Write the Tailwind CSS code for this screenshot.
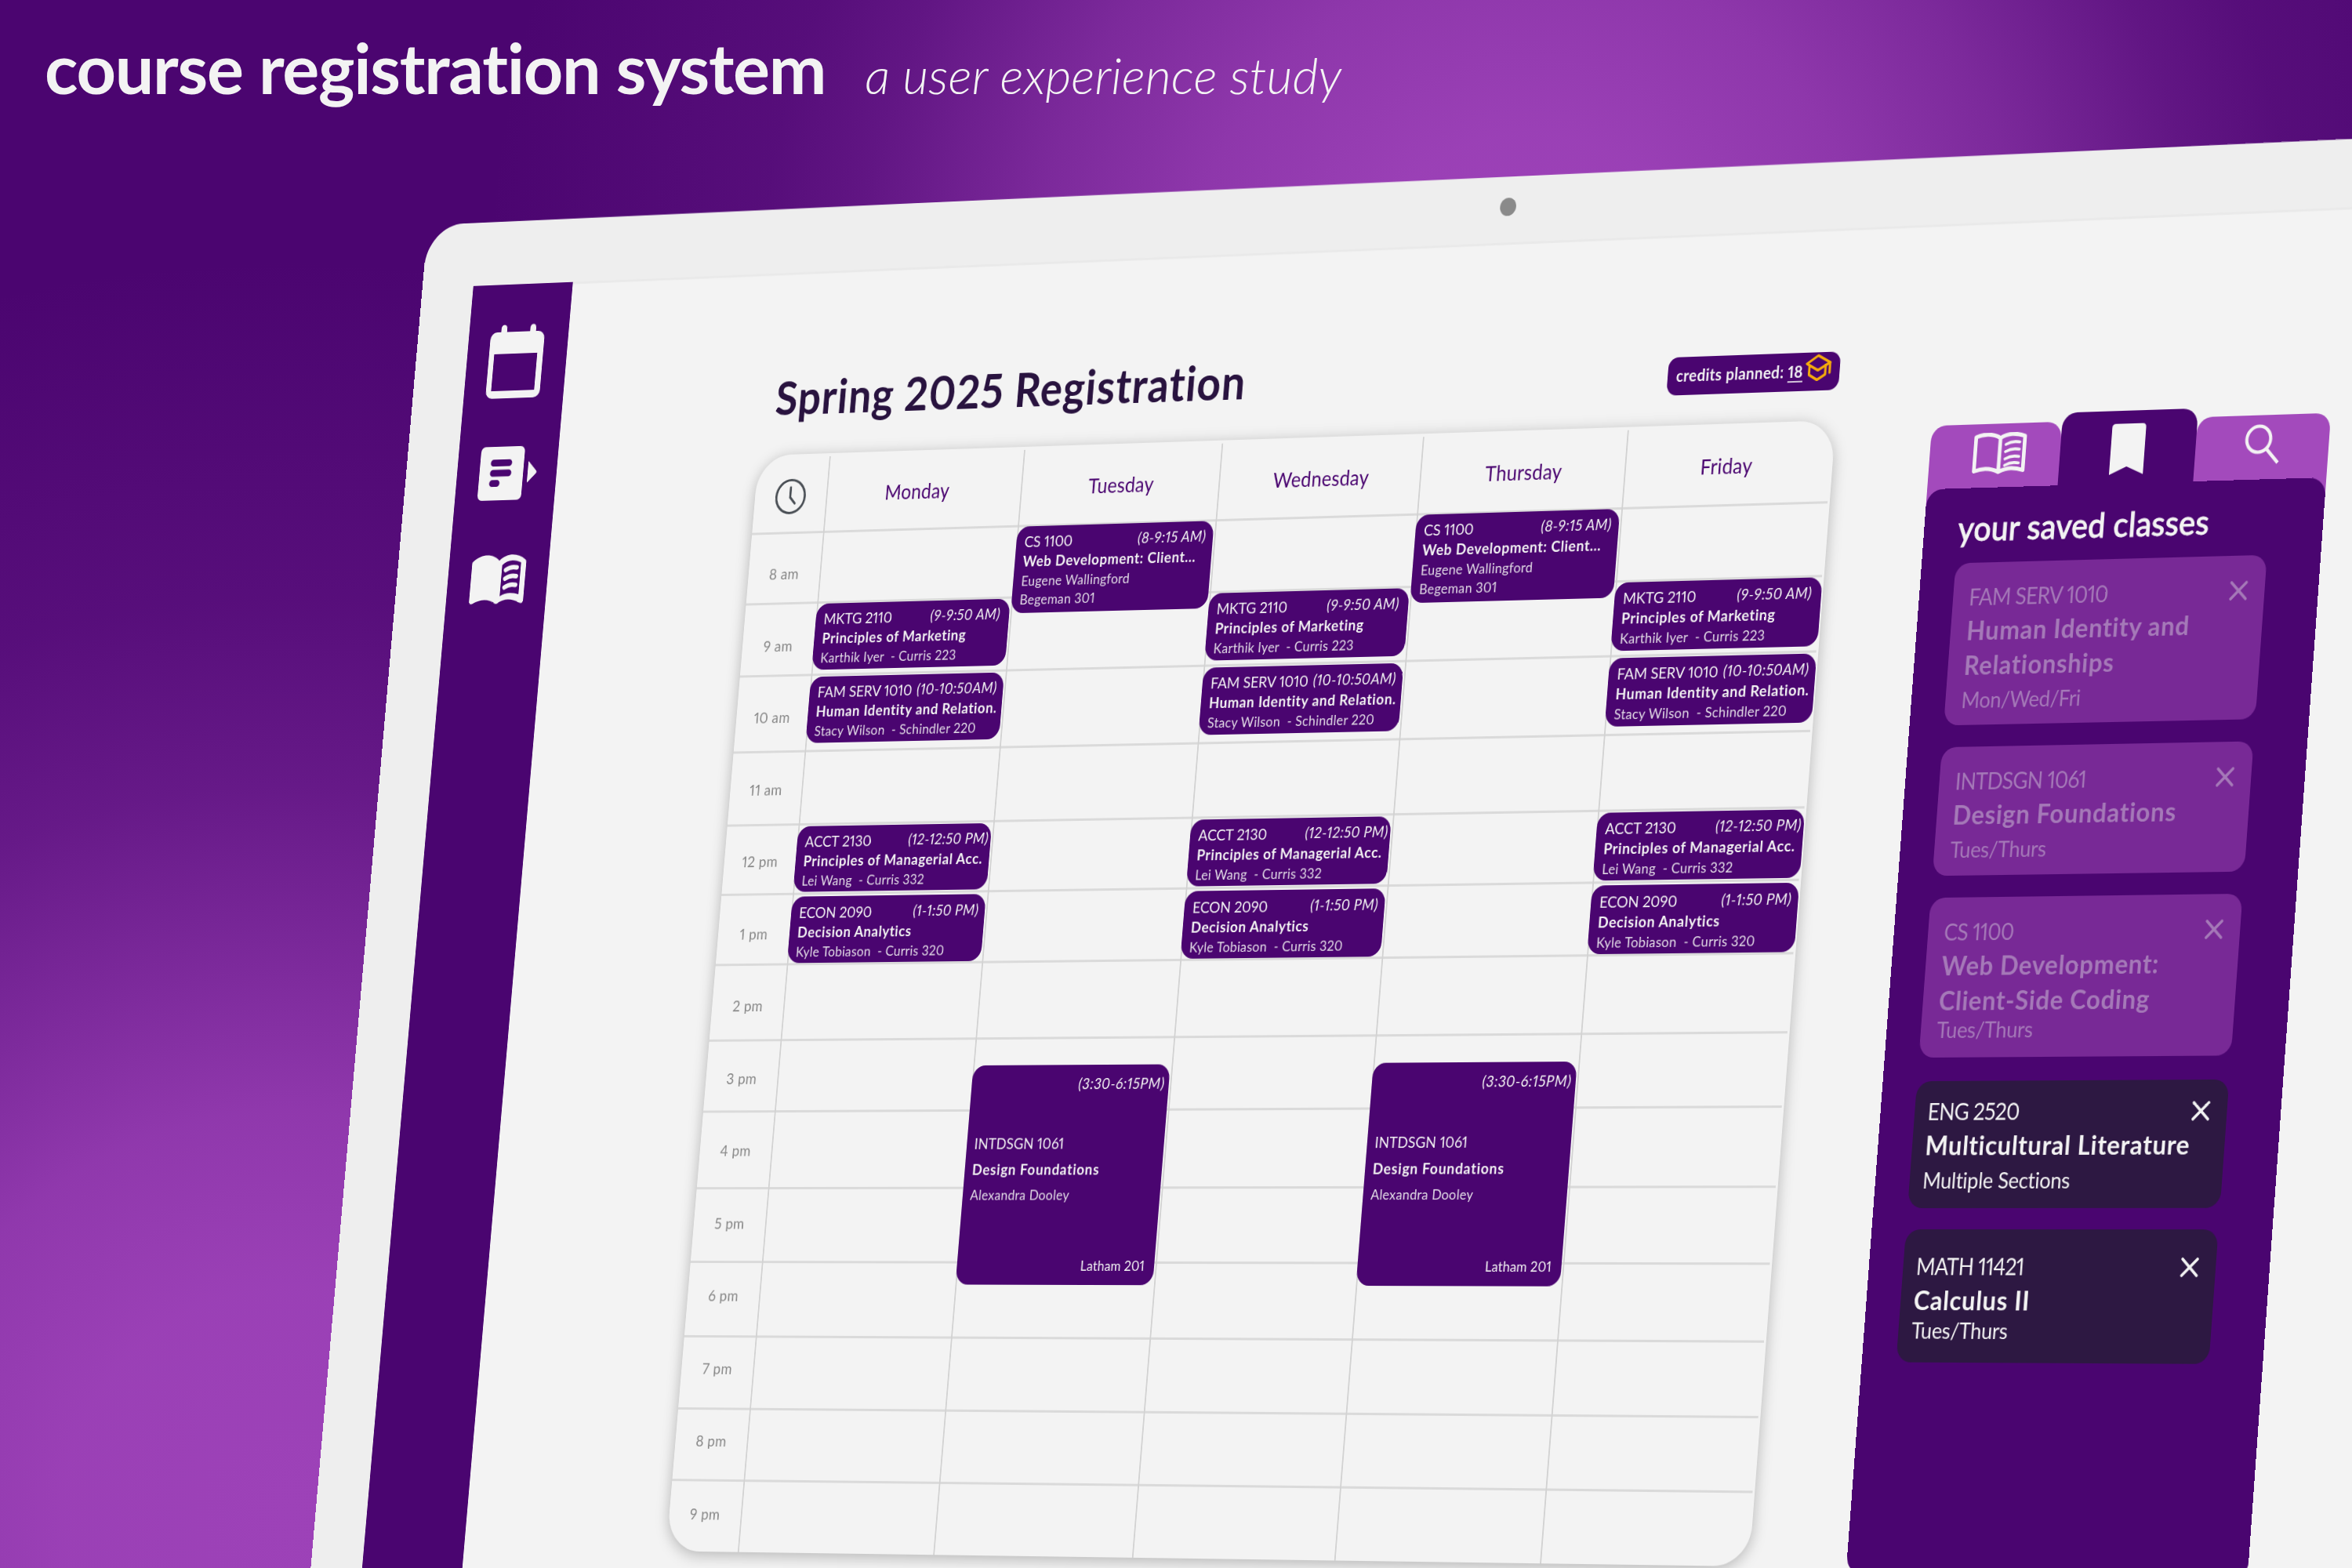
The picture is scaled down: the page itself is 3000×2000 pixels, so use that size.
<!DOCTYPE html>
<html lang="en">
<head>
<meta charset="utf-8">
<title>course registration system</title>
<script src="https://cdn.jsdelivr.net/npm/@tailwindcss/browser@4"></script>
</head>
<body>
<div class="relative h-[2000px] w-[3000px] overflow-hidden bg-[#4b0570] font-['Lato','Open_Sans',sans-serif] text-[#f3f3f3] proportional-nums [font-variant-ligatures:none]">

<!-- backdrop glow -->
<div class="absolute inset-0 bg-[radial-gradient(circle_1400px_at_1950px_380px,rgba(157,66,184,1)_0%,rgba(157,66,184,0.97)_15%,rgba(157,66,184,0.82)_31%,rgba(157,66,184,0.6)_45%,rgba(157,66,184,0.27)_61%,rgba(157,66,184,0.14)_70%,rgba(157,66,184,0)_95%),radial-gradient(circle_1600px_at_370px_1930px,rgba(157,66,184,1)_0%,rgba(157,66,184,0.97)_18%,rgba(157,66,184,0.84)_32%,rgba(157,66,184,0.6)_44%,rgba(157,66,184,0.33)_58%,rgba(157,66,184,0.15)_73%,rgba(157,66,184,0)_100%)]"></div>

<!-- monitor, laid out flat and tilted by one perspective matrix -->
<div class="absolute left-0 top-0 h-[1960px] w-[3248px] origin-top-left px-[80px] pt-[84px] [transform:matrix3d(0.796639,-0.0431058,0,-0.0000276718,-0.086762,0.955299,0,-0.0000060572,0,0,1,0,545.718,287.062,0,1)]">
  <!-- bezel and glass -->
  <div class="absolute inset-0 origin-top-left -skew-y-[0.07deg] rounded-[56px_56px_0_0] bg-[#eeeeee] px-[80px] pt-[84px]">
    <div class="h-full border-t-3 border-[#e9e9e9] bg-[#f3f3f3]"></div>
  </div>
  <div class="absolute left-[1613px] top-[25px] size-[23px] rounded-full bg-[#8a8a8a]"></div>

  <div class="relative flex h-full pt-[3px]">
    <!-- sidebar -->
    <nav class="-mt-[3px] flex w-[155px] flex-col items-center bg-[#4a0570] pt-[53px]">
      <svg class="-ml-[3px] h-[98px] w-[84px]" viewBox="0 0 84 98" fill="none">
        <path d="M20.500 5V14M65.500 5V14" stroke="#f3f3f3" stroke-width="9" stroke-linecap="round"/>
        <path fill-rule="evenodd" fill="#f3f3f3" d="M10 10H74A10 10 0 0 1 84 20V88A10 10 0 0 1 74 98H10A10 10 0 0 1 0 88V20A10 10 0 0 1 10 10ZM8 39V88H75V39Z"/>
      </svg>
      <svg class="mt-[64px] ml-[4px] h-[71px] w-[90px]" viewBox="0 0 90 71">
        <rect width="68" height="71" rx="7" fill="#f3f3f3"/>
        <path d="M21 21.500H45M21 35H45M21 48.500H28" stroke="#4a0570" stroke-width="9" stroke-linecap="round"/>
        <path d="M75 21.500Q75 20 76 21L88 33Q89.500 35 88 36.500L76 48Q75 49 75 47.500Z" fill="#f3f3f3"/>
      </svg>
      <svg class="mt-[72px] h-[66px] w-[84px]" viewBox="0 0 84 66">
        <path fill="#f3f3f3" d="M2 8C14 -2 32 -2 42 8C53 -2 70 -2 82 7Q84 8 84 11V62Q83 66 78 64C67 58 53 58 45 64Q42 66 39 64C31 58 17 58 6 64Q1 66 0 62V11Q0 9 2 8Z"/>
        <path fill="#4a0570" d="M47 14C54 7 65 6 76 11V53C66 50 55 50 47 55Z"/>
        <path d="M53 20.500Q61 15.500 70 17.500M53 32Q61 27 70 29M53 43.500Q61 38.500 70 40.500" stroke="#f3f3f3" stroke-width="6" fill="none" stroke-linecap="round"/>
      </svg>
    </nav>

    <!-- schedule -->
    <main class="ml-[309px] mt-[125px] w-[1568px]">
      <header class="flex h-[110px] justify-between">
        <h1 class="ml-[19px] mt-[4px] text-[61px] leading-none font-bold tracking-[0.019em] whitespace-nowrap text-[#29133f]">Spring 2025 Registration</h1>
        <div class="mt-[24px] flex h-[48px] w-[241px] items-center rounded-[14px] bg-[#4a0570] pl-[12px] text-[20.500px] leading-none font-bold tracking-[0.02em]">
          <span class="-mt-[2px] w-[181px] whitespace-nowrap">credits planned: <span class="border-b-2 border-[#f3f3f3]/80">18</span></span>
          <svg class="-mt-[10px] h-[34px] w-[36px]" viewBox="0 0 36 34" fill="none" stroke="#f5ab0b" stroke-width="3.200" stroke-linejoin="round" stroke-linecap="round">
            <path d="M1.800 12L17 2L34 11L17.500 20.500Z"/><path d="M5.500 15V26L17 32.500L28 26V15M34 11V24"/>
          </svg>
        </div>
      </header>

      <section class="relative h-[1420px] rounded-[50px] bg-[#f3f3f3] shadow-[0_4px_20px_rgba(0,0,0,0.26)]">
        <div id="lines" class="absolute inset-0 flex flex-col pr-[3px]"></div>
        <div class="absolute inset-0 flex">
          <div class="w-[108px] text-center text-[20px] tracking-[0.02em] text-[#868686]">
            <div class="flex h-[109px] items-center justify-center">
              <svg class="size-[48px]" viewBox="0 0 48 48" fill="none" stroke="#4a4f55" stroke-width="3.200" stroke-linecap="round"><circle cx="24" cy="24" r="21.500"/><path d="M23.500 12V25L31 33"/></svg>
            </div>
            <div id="hours" class="leading-[93.500px]"></div>
          </div>
          <div id="week" class="grid flex-1 grid-cols-5"></div>
        </div>
      </section>
    </main>

    <!-- saved classes -->
    <aside class="ml-[134px] mt-[235px] w-[542px]">
      <div class="flex h-[90px] items-end">
        <div class="-mb-[30px] flex h-[109px] w-[179px] justify-center rounded-t-[20px] bg-[#a34abc] pt-[11px] pl-[12px]">
          <svg class="h-[52px] w-[72px]" viewBox="0 0 72 52" fill="none" stroke="#f3f3f3" stroke-linecap="round" stroke-linejoin="round">
            <path stroke-width="5" d="M2.500 5C13 1 27 1 36 7C45 1 58 1 69.500 5V47.500C58 43.500 46 44 36 49C26 44 14 43.500 2.500 47.500ZM36 7V48"/>
            <path stroke-width="3.600" d="M44 15Q53 10.500 63 12.500M44 24Q53 19.500 63 21.500M44 33Q53 28.500 63 30.500M44 41Q53 36.500 63 38.500"/>
          </svg>
        </div>
        <div class="relative -mb-[20px] flex h-[110px] w-[184px] justify-center rounded-t-[20px] bg-[#4a0570] pt-[16px]">
          <svg class="h-[63px] w-[46px]" viewBox="0 0 46 63"><path fill="#f3f3f3" d="M5 0H41Q46 0 46 5V63L23 53L0 63V5Q0 0 5 0Z"/></svg>
        </div>
        <div class="-mb-[30px] flex h-[109px] w-[179px] justify-center rounded-t-[20px] bg-[#a34abc] pt-[11px]">
          <svg class="h-[50px] w-[48px]" viewBox="0 0 48 50" fill="none" stroke="#f3f3f3" stroke-width="4.200"><circle cx="18.500" cy="18.500" r="16"/><path d="M29.500 30.500L46 48"/></svg>
        </div>
      </div>
      <div class="relative h-[1338px] rounded-[22px] bg-[#4a0570] pl-[47px] pt-[26px]">
        <h2 class="text-[42px] leading-[48px] font-medium tracking-[0.005em] [-webkit-text-stroke:0.8px_#f3f3f3]">your saved classes</h2>
        <div id="saved" class="mt-[19px]"></div>
      </div>
    </aside>
  </div>
</div>

<!-- page heading -->
<header class="absolute left-[57px] top-0 flex items-baseline">
  <div class="text-[88px] leading-[172px] font-bold tracking-[-0.014em] whitespace-nowrap">course registration system</div>
  <div class="ml-[50px] text-[64px] leading-[172px] font-light italic whitespace-nowrap">a user experience study</div>
</header>
</div>

<script>
const rows = [103.6, 92.7, 94.1, 98.5, 95.5, 90, 90.8, 98.3, 91.9, 99, 94.3, 96.5, 92.5, 92];
document.getElementById('lines').innerHTML = rows.map(h => `<div class="shrink-0 border-b-3 border-[#dadada]" style="height:${h}px"></div>`).join('');

const hours = ['8 am','9 am','10 am','11 am','12 pm','1 pm','2 pm','3 pm','4 pm','5 pm','6 pm','7 pm','8 pm','9 pm'];
document.getElementById('hours').innerHTML = hours.map(h => `<div>${h}</div>`).join('');

const mwf = [
  [195.5, 86, 'MKTG 2110', '(9-9:50 AM)', 'Principles of Marketing', ['Karthik Iyer  - Curris 223'], 13],
  [290.5, 86, 'FAM SERV 1010', '(10-10:50AM)', 'Human Identity and Relation.', ['Stacy Wilson  - Schindler 220'], 9],
  [484.5, 85, 'ACCT 2130', '(12-12:50 PM)', 'Principles of Managerial Acc.', ['Lei Wang  - Curris 332'], 3],
  [576, 86, 'ECON 2090', '(1-1:50 PM)', 'Decision Analytics', ['Kyle Tobiason  - Curris 320'], 9],
];
const tt = [
  [102.6, 112, 'CS 1100', '(8-9:15 AM)', 'Web Development: Client...', ['Eugene Wallingford', 'Begeman 301'], 10],
];
const block = ([y, h, code, time, title, info, pr]) => `
  <div class="absolute left-0 right-[2px] rounded-[18px] bg-[#4a0570] pl-[12px] pt-[6.500px]" style="top:${y}px;height:${h}px">
    <div class="flex justify-between text-[20px] leading-[26px] whitespace-pre" style="padding-right:${pr}px"><span>${code}</span><span class="-mt-[1px] tracking-[0.025em] italic">${time}</span></div>
    <div class="text-[19.500px] leading-[26px] font-bold tracking-[0.035em] whitespace-pre">${title}</div>
    ${info.map(t => `<div class="text-[18px] leading-[24px] tracking-[0.02em] whitespace-pre text-[#f3f3f3]/90">${t}</div>`).join('')}
  </div>`;
const studio = `
  <div class="absolute left-0 right-[2px] top-[796px] flex h-[280px] flex-col rounded-[18px] bg-[#4a0570] pl-[11px] pt-[9.500px] pb-[12px]">
    <div class="pr-[6px] text-right text-[20px] leading-[26px] tracking-[0.035em] italic">(3:30-6:15PM)</div>
    <div class="mt-[51px] text-[19.500px] leading-[26px] tracking-[0.01em]">INTDSGN 1061</div>
    <div class="mt-[4px] text-[19.500px] leading-[32px] font-bold tracking-[0.045em]">Design Foundations</div>
    <div class="text-[18px] leading-[32px] tracking-[0.02em] text-[#f3f3f3]/90">Alexandra Dooley</div>
    <div class="mt-auto pr-[14px] text-right text-[18px] leading-[26px] tracking-[0.01em]">Latham 201</div>
  </div>`;
const days = [['Monday', 'pr-[18px]'], ['Tuesday', 'pl-[5px]'], ['Wednesday', 'pl-[6px]'], ['Thursday', 'pl-[5px]'], ['Friday', 'pr-[5px]']];
document.getElementById('week').innerHTML = days.map(([d, shift], i) => `
  <div class="relative">
    <div class="absolute bottom-0 left-0 top-[4px] w-[2px] bg-[#d2d2d2]"></div>
    <div class="${shift} text-center text-[26.500px] leading-[107px] tracking-[0.01em] text-[#4a0570]">${d}</div>
    ${i % 2 ? tt.map(block).join('') + studio : mwf.map(block).join('')}
  </div>`).join('');

const saved = [
  [201, 26.5, 'pt-[22px]', 'FAM SERV 1010', ['Human Identity and', 'Relationships'], 'Mon/Wed/Fri', 'leading-[43px]', 0],
  [159, 27, 'pt-[22px]', 'INTDSGN 1061', ['Design Foundations'], 'Tues/Thurs', 'leading-[43px]', 0],
  [197.5, 29, 'pt-[22px]', 'CS 1100', ['Web Development:', 'Client-Side Coding'], 'Tues/Thurs', 'leading-[30px]', 0],
  [155.5, 26.5, 'pt-[17px]', 'ENG 2520', ['Multicultural Literature'], 'Multiple Sections', 'leading-[43px]', 1],
  [163, 0, 'pt-[25px]', 'MATH 11421', ['Calculus II'], 'Tues/Thurs', 'leading-[31px]', 1],
];
document.getElementById('saved').innerHTML = saved.map(([h, gap, pt, code, title, sub, lead, open]) => `
  <div class="${open ? 'bg-[#2d1842] pl-[18px] text-[#f3f3f3]' : 'bg-[#782996] pl-[22px] text-[#a579b8]'} ${pt} w-[423px] rounded-[20px] pr-[22px]" style="height:${h}px;margin-bottom:${gap}px">
    <div class="flex items-center justify-between text-[28px] leading-[40px] tracking-[-0.025em]"><span>${code}</span>
      <svg class="mt-[2px] size-[26px]" viewBox="0 0 26 26" fill="none" stroke="currentColor" stroke-width="3.600" stroke-linecap="round"><path d="M3 3L23 23M23 3L3 23"/></svg></div>
    ${title.map(t => `<div class="text-[33px] leading-[43px] font-bold tracking-[0.022em] whitespace-nowrap">${t}</div>`).join('')}
    <div class="${lead} text-[27px] tracking-[-0.01em]">${sub}</div>
  </div>`).join('');
</script>
</body>
</html>
